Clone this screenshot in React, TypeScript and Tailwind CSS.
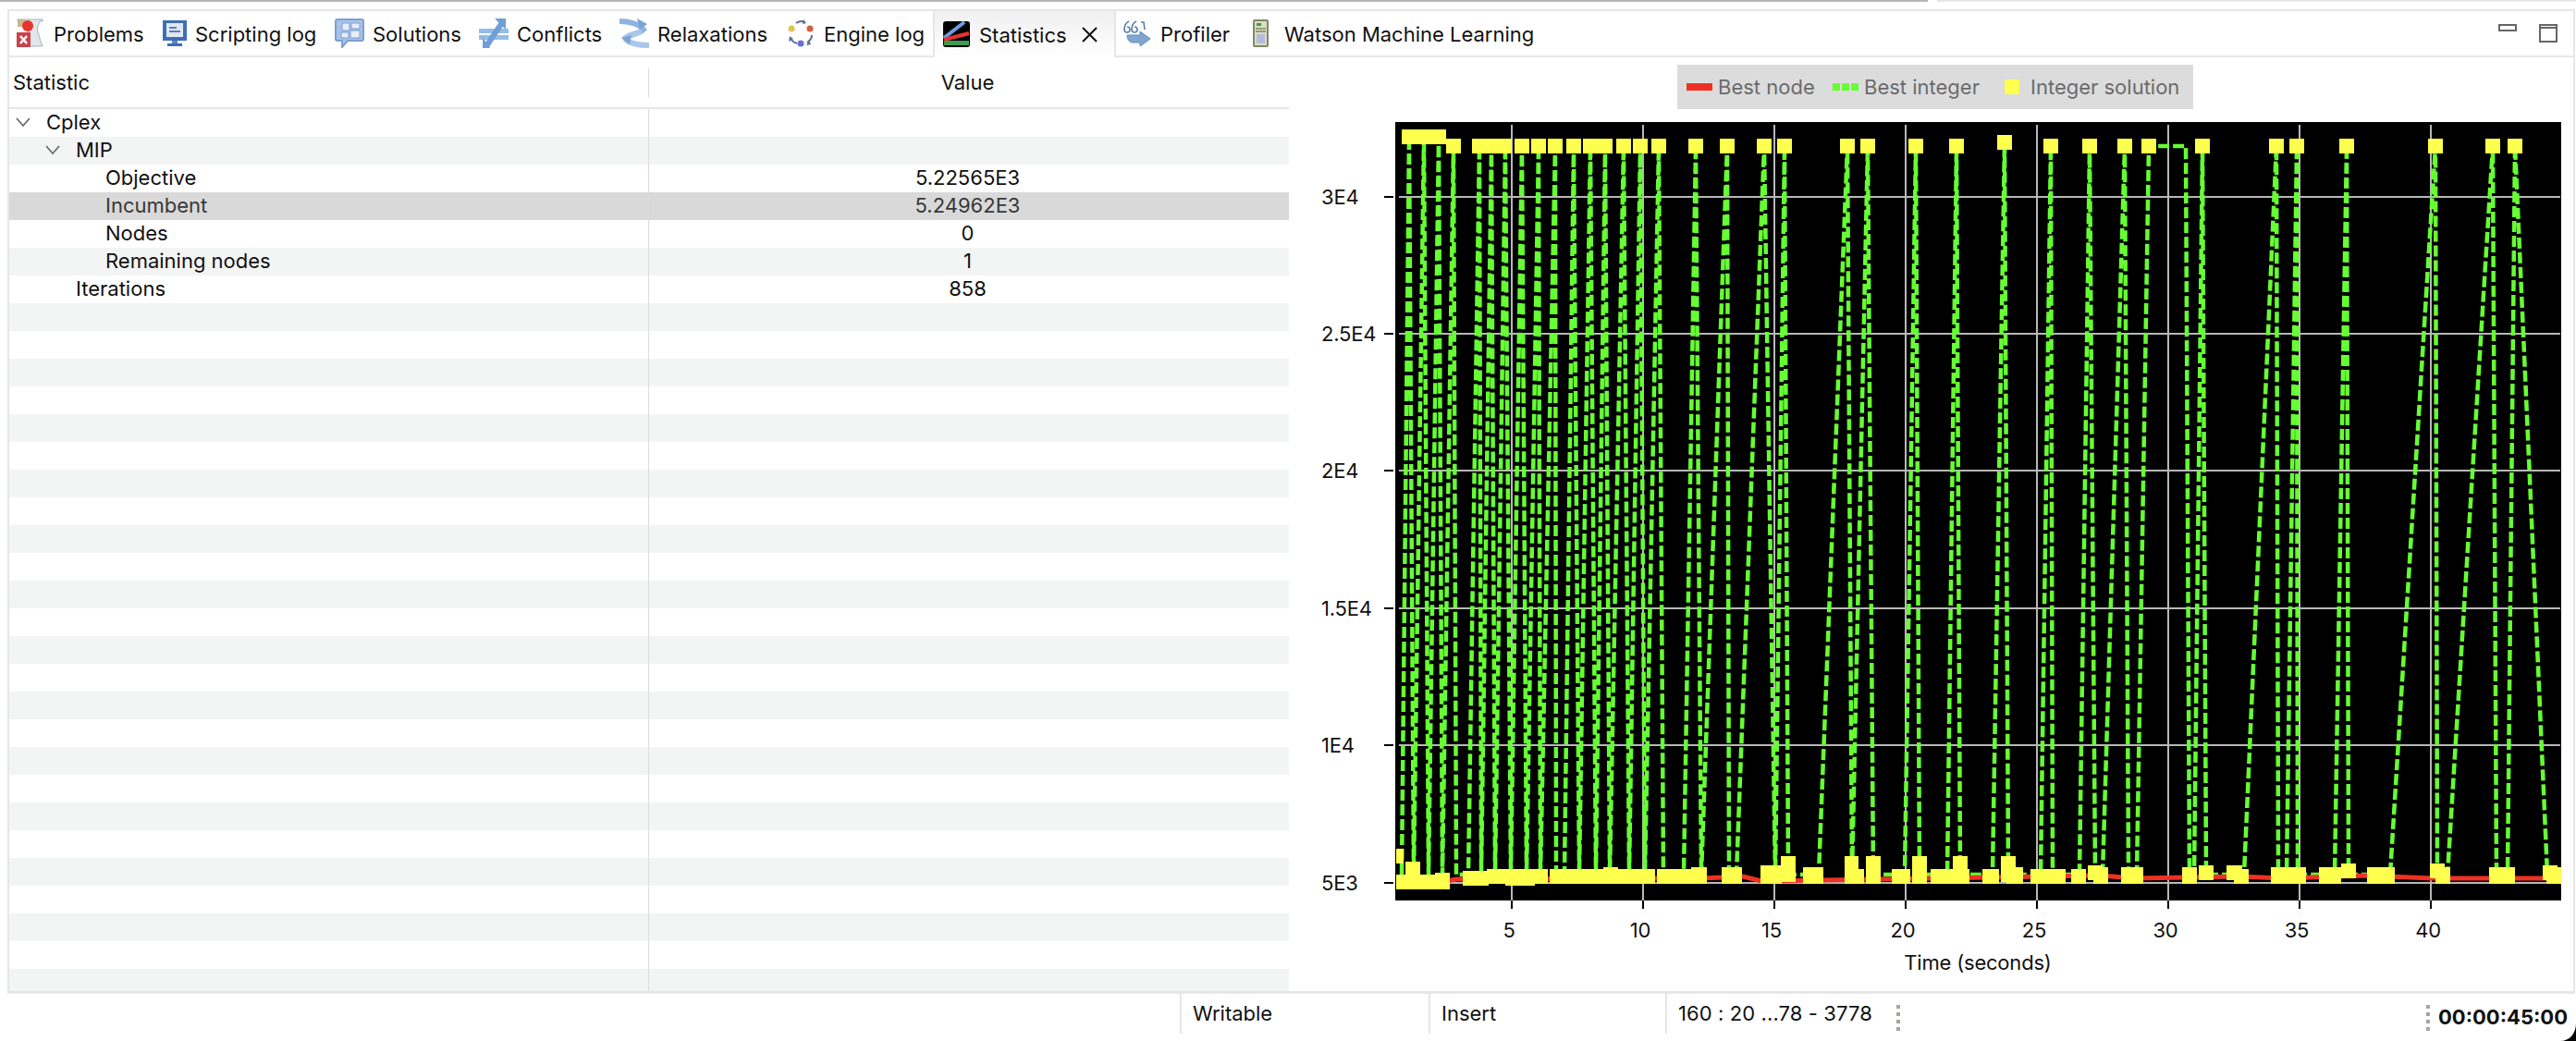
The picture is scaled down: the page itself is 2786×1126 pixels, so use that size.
const statusGrip = [0, 1, 2, 3];

function ProblemsIcon() {
  return (
    <svg width="29" height="32" viewBox="0 0 29 32">
      <path d="M1 1h27v2h-3c-3 6-3 10-1 15 1 4 2 7 4 12H12V3H1z" fill="#e3e6ea" stroke="#a9b1b8" />
      <path d="M1 1h8v8H1z" fill="#c9b98f" />
      <circle cx="12" cy="8" r="6" fill="#e8342f" />
      <rect x="0" y="15" width="15" height="16" fill="#c8434a" />
      <path d="M4 19l7 8M11 19l-7 8" stroke="#fff" strokeWidth="2.5" />
    </svg>
  );
}

function ScriptingIcon() {
  return (
    <svg width="26" height="28" viewBox="0 0 26 28">
      <rect x="0" y="0" width="26" height="22" fill="#3f6eb5" />
      <rect x="4" y="3" width="18" height="15" fill="#dfe8f5" />
      <path d="M7 8h8M7 12h12" stroke="#5b7fb8" strokeWidth="2" />
      <path d="M10 22h6v3h-6z" fill="#5c86c0" />
      <path d="M5 25h16v3H5z" fill="#3f6eb5" />
    </svg>
  );
}

function SolutionsIcon() {
  return (
    <svg width="32" height="32" viewBox="0 0 32 32">
      <path d="M3 1h26a2 2 0 0 1 2 2v19a2 2 0 0 1-2 2H14l-6 7v-7H3a2 2 0 0 1-2-2V3a2 2 0 0 1 2-2z" fill="#a9c3e8" stroke="#7d9fd2" strokeWidth="2" />
      <path d="M8 5h8v8H8zM18 5h9v6h-9zM7 15h8v6H7zM17 13h10v8H17z" fill="#e6eef9" stroke="#7d9fd2" />
    </svg>
  );
}

function ConflictsIcon() {
  return (
    <svg width="32" height="32" viewBox="0 0 32 32">
      <path d="M0 11h32v5H0zM0 18h32v5H0z" fill="#93bde8" />
      <path d="M8 30L24 6" stroke="#6f9fd6" strokeWidth="6" />
      <path d="M17 0h12v12z" fill="#6f9fd6" />
      <path d="M4 20v12h8z" fill="#6f9fd6" />
    </svg>
  );
}

function RelaxationsIcon() {
  return (
    <svg width="32" height="32" viewBox="0 0 32 32" fill="none">
      <path d="M0 3c10 0 22 3 26 9-3 3-9 5-17 7" stroke="#8db4e0" strokeWidth="6" />
      <path d="M32 29C22 29 8 27 6 21c3-3 10-4 18-7" stroke="#a9c7ea" strokeWidth="6" />
      <path d="M19 0l11 6-8 6z" fill="#7aa3d6" />
      <path d="M2 21l9 7 2-10z" fill="#7aa3d6" />
    </svg>
  );
}

function EngineIcon() {
  return (
    <svg width="28" height="30" viewBox="0 0 28 30" fill="none">
      <path d="M9 4c3-2 6-3 9-1M26 17c0 3-2 6-5 8M10 26c-3-1-6-3-7-6" stroke="#5a6f96" strokeWidth="2" />
      <path d="M17 0l3 4-4 1zM20 28l3-5 2 4zM1 24l1-6 4 3z" fill="#5a6f96" />
      <circle cx="4" cy="10" r="3.5" fill="#e0c64c" />
      <circle cx="24" cy="10" r="3.5" fill="#d0603f" />
      <circle cx="14" cy="26" r="3.5" fill="#6a6fd6" />
    </svg>
  );
}

function StatisticsIcon() {
  return (
    <svg width="29" height="28" viewBox="0 0 29 28">
      <rect width="29" height="28" rx="3" fill="#000" />
      <path d="M1 18L23 1" stroke="#6f9be0" strokeWidth="4" />
      <path d="M1 20l27-7" stroke="#e8342f" strokeWidth="4" />
      <path d="M1 21h27v5H1z" fill="#3f9b4f" />
    </svg>
  );
}

function ProfilerIcon() {
  return (
    <svg width="30" height="28" viewBox="0 0 30 28" fill="none">
      <path d="M6 1C2 3 1 7 1 10a3 3 0 1 0 3-3M14 1c-4 2-5 6-5 9a3 3 0 1 0 3-3M19 2h3l1 8" stroke="#5a7fa8" strokeWidth="1.6" />
      <path d="M4 16h14v-4l11 8-11 8v-4H10c-3 0-6-3-6-8z" fill="#7fa6d0" stroke="#6088b5" />
    </svg>
  );
}

function WatsonIcon() {
  return (
    <svg width="17" height="30" viewBox="0 0 17 30">
      <rect x="1" y="1" width="15" height="28" rx="1" fill="#d9dcc7" stroke="#7f8760" strokeWidth="2" />
      <rect x="4" y="4" width="5" height="3" fill="#3f9b4f" />
      <path d="M3 10h11M3 13h11" stroke="#7f8760" strokeWidth="1.5" />
      <rect x="4" y="16" width="9" height="10" fill="#b4bcdc" />
    </svg>
  );
}

function Tab({ className, icon, label, children }: { className: string; icon: React.ReactNode; label: string; children?: React.ReactNode }) {
  return (
    <div className={`flex items-center h-[48px] shrink-0 ${className}`}>
      {icon}
      <span className="whitespace-nowrap pt-[2px]">{label}</span>
      {children}
    </div>
  );
}

const rows = [
  { label: "Cplex", value: "", pad: "pl-[40px]", chev: "ml-[-33px]" },
  { label: "MIP", value: "", pad: "pl-[72px]", chev: "ml-[-33px]" },
  { label: "Objective", value: "5.22565E3", pad: "pl-[104px]" },
  { label: "Incumbent", value: "5.24962E3", pad: "pl-[104px]", selected: true },
  { label: "Nodes", value: "0", pad: "pl-[104px]" },
  { label: "Remaining nodes", value: "1", pad: "pl-[104px]" },
  { label: "Iterations", value: "858", pad: "pl-[72px]" },
  ...Array.from({ length: 25 }, () => ({ label: "", value: "", pad: "" })),
] as { label: string; value: string; pad: string; chev?: string; selected?: boolean }[];

function StatsTable() {
  return (
    <div className="w-[1384px] shrink-0">
      <div className="flex items-center h-[56px] border-b-2 border-[#e6e6e6]">
        <div className="w-[692px] h-[32px] flex items-center pl-[4px] border-r border-[#dcdcdc]">Statistic</div>
        <div className="flex-1 text-center pr-[3px]">Value</div>
      </div>
      <div className="h-[954px] overflow-hidden">
        {rows.map((row, i) => (
          <div
            key={i}
            className={`flex h-[30px] items-center ${row.selected ? "bg-[#d9d9d9] text-[#383838]" : i % 2 === 1 ? "bg-[#f3f4f4]" : "bg-white"}`}
          >
            <div className={`w-[692px] h-full flex items-center pb-[2px] border-r border-[#dcdcdc] ${row.pad}`}>
              {row.chev && (
                <svg className={`${row.chev} mr-[17px]`} width="16" height="11" viewBox="0 0 16 11" fill="none">
                  <path d="M1 1l7 8 7-8" stroke="#6b6b6b" strokeWidth="1.8" />
                </svg>
              )}
              {row.label}
            </div>
            <div className="flex-1 text-center pr-[3px] pb-[2px]">{row.value}</div>
          </div>
        ))}
      </div>
    </div>
  );
}

function Legend() {
  return (
    <div className="ml-[420px] w-[558px] h-[48px] bg-[#dcdcdc] flex items-center text-[#6b6b6b] pl-[10px]">
      <span className="w-[28px] h-[8px] bg-[#ee3124] mr-[6px]" />
      <span className="w-[124px]">Best node</span>
      <span className="w-[28px] h-[8px] mr-[6px] flex gap-[2px]">
        <i className="flex-1 bg-[#66ff33]" />
        <i className="flex-1 bg-[#66ff33]" />
        <i className="flex-1 bg-[#66ff33]" />
      </span>
      <span className="w-[152px]">Best integer</span>
      <span className="w-[16px] h-[16px] bg-[#ffff4d] mr-[12px]" />
      <span>Integer solution</span>
    </div>
  );
}

// bottom-in x, top x, bottom-out x (page pixels)
const peaks = [
  [1516, 1524, 1529], [1529, 1540, 1545], [1545, 1556, 1560], [1560, 1572, 1575],
  [1588, 1600, 1602], [1602, 1613, 1617], [1617, 1628, 1634], [1634, 1646, 1651],
  [1651, 1664, 1666], [1666, 1682, 1683], [1692, 1702, 1708], [1708, 1720, 1726],
  [1726, 1736, 1741], [1741, 1756, 1762], [1762, 1774, 1779], [1779, 1794, 1799],
  [1821, 1834, 1840], [1840, 1868, 1870], [1878, 1908, 1920], [1920, 1930, 1934],
  [1967, 1998, 2003], [2003, 2020, 2026], [2060, 2072, 2076], [2106, 2116, 2120],
  [2155, 2168, 2172], [2207, 2218, 2220], [2249, 2260, 2266], [2274, 2298, 2302],
];
const peaksAfter = [
  [2373, 2382, 2386], [2427, 2462, 2464], [2473, 2484, 2485], [2525, 2538, 2540],
  [2585, 2634, 2636], [2647, 2696, 2700], [2712, 2720, 2755],
];

function topY(x: number) {
  if (x < 1560) return 148;
  if (x === 2168) return 154;
  return 158;
}

const bottomY = 946;
const greenPoints = [
  ...peaks.flatMap(([a, t, b]) => [`${a},${bottomY}`, `${t},${topY(t)}`, `${b},${bottomY}`]),
  `2311,${bottomY}`, "2324,158", "2364,158", `2368,${bottomY}`,
  ...peaksAfter.flatMap(([a, t, b]) => [`${a},${bottomY}`, `${t},158`, `${b},${bottomY}`]),
].join(" ");

const topBoxes: [number, number, number][] = [
  [1516, 140, 48], [1564, 150, 16], [1592, 150, 43], [1638, 150, 16], [1656, 150, 16], [1674, 150, 16],
  [1694, 150, 16], [1712, 150, 32], [1748, 150, 16], [1766, 150, 16], [1786, 150, 16], [1826, 150, 16],
  [1860, 150, 16], [1900, 150, 16], [1922, 150, 16], [1990, 150, 16], [2012, 150, 16], [2064, 150, 16],
  [2108, 150, 16], [2160, 146, 16], [2210, 150, 16], [2252, 150, 16], [2290, 150, 16], [2316, 150, 16],
  [2374, 150, 16], [2454, 150, 16], [2476, 150, 16], [2530, 150, 16], [2626, 150, 16], [2688, 150, 16],
  [2712, 150, 16],
];

// x, y, w, h
const bottomBoxes: [number, number, number, number][] = [
  [1510, 918, 8, 16], [1510, 946, 58, 16], [1520, 932, 16, 16], [1552, 944, 16, 18],
  [1582, 942, 28, 16], [1608, 940, 66, 16], [1628, 942, 32, 16], [1676, 940, 114, 16],
  [1734, 938, 16, 16], [1792, 940, 37, 16], [1829, 938, 17, 18], [1862, 938, 22, 18],
  [1904, 936, 23, 20], [1926, 926, 16, 28], [1950, 938, 22, 18], [1995, 926, 15, 30],
  [2010, 940, 6, 16], [2018, 926, 16, 30], [2046, 940, 20, 16], [2068, 926, 16, 30],
  [2088, 940, 24, 16], [2112, 926, 16, 28], [2112, 940, 18, 16], [2144, 940, 18, 16],
  [2164, 926, 16, 28], [2170, 938, 18, 18], [2196, 940, 38, 16], [2240, 940, 16, 16],
  [2258, 936, 16, 16], [2264, 938, 16, 18], [2294, 938, 24, 18], [2360, 938, 16, 18],
  [2378, 936, 16, 16], [2408, 936, 17, 16], [2416, 940, 16, 16], [2456, 938, 16, 18],
  [2472, 938, 22, 18], [2508, 938, 24, 18], [2532, 934, 16, 16], [2560, 938, 30, 18],
  [2628, 934, 16, 16], [2634, 938, 16, 18], [2692, 938, 28, 18], [2750, 936, 16, 16],
  [2754, 938, 16, 18],
];

const yTicks = [
  { label: "3E4", y: 213 },
  { label: "2.5E4", y: 361 },
  { label: "2E4", y: 509 },
  { label: "1.5E4", y: 658 },
  { label: "1E4", y: 806 },
  { label: "5E3", y: 955 },
];
const xTicks = [5, 10, 15, 20, 25, 30, 35, 40].map((v) => ({ label: String(v), x: 1635 + (v - 5) * 28.4 }));

function Chart() {
  return (
    <svg width="1389" height="954" viewBox="1394 118 1389 954" className="block">
      <rect x="1509" y="132" width="1261" height="842" fill="#000" />
      {xTicks.map((t) => (
        <g key={t.label}>
          <line x1={t.x} x2={t.x} y1="135" y2="974" stroke="#b8b8b8" strokeWidth="2" />
          <line x1={t.x} x2={t.x} y1="974" y2="983" stroke="#000" strokeWidth="2" />
          <text x={t.x - 3} y="1014" textAnchor="middle" fontSize="22" fill="#111" letterSpacing="-0.2">{t.label}</text>
        </g>
      ))}
      {yTicks.map((t) => (
        <g key={t.label}>
          <line x1="1513" x2="2769" y1={t.y} y2={t.y} stroke="#b8b8b8" strokeWidth="2" />
          <line x1="1497" x2="1507" y1={t.y} y2={t.y} stroke="#000" strokeWidth="2" />
          <text x="1429" y={t.y + 8} fontSize="22" fill="#111" letterSpacing="-0.2">{t.label}</text>
        </g>
      ))}
      <polyline points={greenPoints} fill="none" stroke="#66ff33" strokeWidth="4.5" strokeDasharray="12 4" />
      <polyline points="1510,956 1565,953 1575,951 1840,950 1885,948 1905,953 2270,947 2310,950 2420,948 2470,950 2560,947 2630,950 2770,950" fill="none" stroke="#ee3124" strokeWidth="5" />
      {topBoxes.map(([x, y, w]) => (
        <rect key={`${x}-${y}`} x={x} y={y} width={w} height="16" fill="#ffff4d" />
      ))}
      {bottomBoxes.map(([x, y, w, h]) => (
        <rect key={`${x}-${y}`} x={x} y={y} width={w} height={h} fill="#ffff4d" />
      ))}
      <text x="2139" y="1049" textAnchor="middle" fontSize="22" fill="#111" letterSpacing="-0.2">Time (seconds)</text>
    </svg>
  );
}

function Grip() {
  return (
    <div className="flex flex-col gap-[4px] w-[4px] shrink-0">
      {statusGrip.map((i) => (
        <div key={i} className="h-[4px] bg-[#a8a59c]" />
      ))}
    </div>
  );
}

export default function App() {
  return (
    <div className="relative w-[2786px] h-[1126px] overflow-hidden bg-white text-[22px] leading-none text-[#111] font-[Inter,sans-serif]">
      <div className="flex h-[2px] gap-[10px]">
        <div className="w-[2085px] bg-[#b5b5b5]" />
        <div className="flex-1 bg-[#e6e6e6]" />
      </div>
      <div className="h-[8px]" />

      <div className="ml-[8px] mr-[1px] h-[1065px] border-2 border-b-[3px] border-[#e6e6e6]">
        <div className="flex h-[50px] border-b-2 border-[#e6e6e6]">
          <Tab className="w-[158px] pl-[8px]" icon={<span className="w-[40px] shrink-0"><ProblemsIcon /></span>} label="Problems" />
          <Tab className="w-[186px] pl-[8px]" icon={<span className="w-[35px] shrink-0"><ScriptingIcon /></span>} label="Scripting log" />
          <Tab className="w-[156px] pl-[8px]" icon={<span className="w-[41px] shrink-0"><SolutionsIcon /></span>} label="Solutions" />
          <Tab className="w-[152px] pl-[8px]" icon={<span className="w-[41px] shrink-0"><ConflictsIcon /></span>} label="Conflicts" />
          <Tab className="w-[182px] pl-[8px]" icon={<span className="w-[41px] shrink-0"><RelaxationsIcon /></span>} label="Relaxations" />
          <Tab className="w-[165px] pl-[8px]" icon={<span className="w-[39px] shrink-0"><EngineIcon /></span>} label="Engine log" />
          <Tab
            className="w-[198px] h-[50px] pl-[9px] border-x-2 border-[#e6e6e6] bg-linear-to-b from-[#f0f0f0] to-white"
            icon={<span className="w-[39px] shrink-0"><StatisticsIcon /></span>}
            label="Statistics"
          >
            <svg className="ml-[16px]" width="17" height="17" viewBox="0 0 17 17" fill="none">
              <path d="M1 1l15 15M16 1L1 16" stroke="#111" strokeWidth="2" />
            </svg>
          </Tab>
          <Tab className="w-[140px] pl-[8px]" icon={<span className="w-[40px] shrink-0"><ProfilerIcon /></span>} label="Profiler" />
          <Tab className="pl-[8px]" icon={<span className="w-[34px] shrink-0"><WatsonIcon /></span>} label="Watson Machine Learning" />
          <div className="ml-auto flex items-start gap-[24px] pt-[14px] pr-[17px]">
            <div className="w-[20px] h-[8px] border-2 border-[#666]" />
            <div className="w-[20px] h-[20px] border-2 border-[#666]">
              <div className="h-[3px] border-b-2 border-[#666]" />
            </div>
          </div>
        </div>

        <div className="flex">
          <StatsTable />
          <div className="flex-1 pt-[8px]">
            <Legend />
            <Chart />
          </div>
        </div>
      </div>

      <div className="flex h-[51px]">
        <div className="w-[1276px] shrink-0" />
        <div className="w-[269px] h-[43px] border-l-2 border-[#e6e6e6] pl-[12px] pb-[2px] flex items-center">Writable</div>
        <div className="w-[256px] h-[43px] border-l-2 border-[#e6e6e6] pl-[12px] pb-[2px] flex items-center">Insert</div>
        <div className="w-[250px] h-[43px] border-l-2 border-[#e6e6e6] pl-[12px] pb-[2px] flex items-center whitespace-nowrap tracking-[0.1px]">160 : 20 ...78 - 3778</div>
        <div className="pt-[12px]"><Grip /></div>
        <div className="w-[569px] shrink-0" />
        <div className="pt-[12px]"><Grip /></div>
        <div className="pl-[9px] h-[51px] pb-[2px] flex items-center font-bold whitespace-nowrap text-[#111]">00:00:45:00</div>
      </div>

      <svg className="absolute right-0 bottom-0" width="17" height="19" viewBox="0 0 17 19">
        <path d="M17 0C17 11 10 19 0 19h17z" fill="#000" />
      </svg>
    </div>
  );
}
